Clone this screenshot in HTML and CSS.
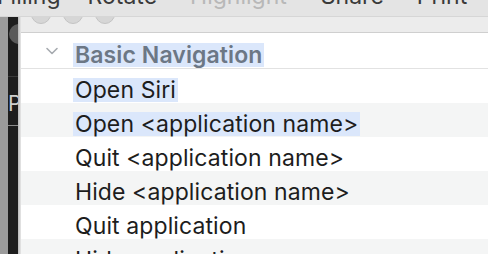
FILE: index.html
```html
<!DOCTYPE html>
<html>
<head>
<meta charset="utf-8">
<link rel="stylesheet" href="styles.css">
</head>
<body>
<div class="screen">
  <div class="menubar">
    <span class="mi">Filling</span>
    <span class="mi">Rotate</span>
    <span class="mi dis">Highlight</span>
    <span class="mi">Share</span>
    <span class="mi">Print</span>
  </div>
  <div class="main">
    <div class="side">
      <div class="edge"></div>
      <div class="dark">
        <div class="knob"></div>
        <div class="sep s1"></div>
        <div class="plet">P</div>
        <div class="sep s2"></div>
      </div>
      <div class="shadow"></div>
    </div>
    <div class="window">
      <div class="titlebar">
        <span class="light"></span><span class="light"></span><span class="light"></span>
      </div>
      <div class="list">
        <div class="row group">
          <svg class="chev" width="14" height="10" viewBox="0 0 14 10"><path d="M2 2.5 L7 7.5 L12 2.5" fill="none" stroke="#a7abb0" stroke-width="1.6" stroke-linecap="round" stroke-linejoin="round"/></svg>
          <span class="hl">Basic Navigation</span>
        </div>
        <div class="row"><span class="hl">Open Siri</span></div>
        <div class="row alt"><span class="hl">Open &lt;application name&gt;</span></div>
        <div class="row"><span class="txt">Quit &lt;application name&gt;</span></div>
        <div class="row alt"><span class="txt">Hide &lt;application name&gt;</span></div>
        <div class="row"><span class="txt">Quit application</span></div>
        <div class="row alt"><span class="txt">Hide application</span></div>
      </div>
    </div>
  </div>
</div>
</body>
</html>
```

FILE: styles.css
```css
html, body {
  margin: 0;
  padding: 0;
}
body {
  width: 488px;
  height: 254px;
  overflow: hidden;
  background: #ffffff;
  font-family: "Inter", "Liberation Sans", sans-serif;
}
.screen {
  width: 488px;
  height: 254px;
  display: flex;
  flex-direction: column;
  overflow: hidden;
}
.menubar {
  height: 16px;
  flex: none;
  background: #e4e4e4;
  display: flex;
  align-items: flex-end;
  overflow: hidden;
  position: relative;
  z-index: 2;
  box-shadow: 0 1px 0 #d6d6d6;
}
.mi {
  font-size: 23px;
  line-height: 23px;
  color: #3a3a3a;
  margin-bottom: 8px;
  white-space: nowrap;
  flex: none;
}
.mi:nth-child(1) { margin-left: -3px; }
.mi:nth-child(2) { margin-left: 27px; }
.mi:nth-child(3) { margin-left: 33px; }
.mi:nth-child(4) { margin-left: 34px; }
.mi:nth-child(5) { margin-left: 33px; }
.mi.dis { color: #b8b8b8; }
.main {
  flex: 1;
  display: flex;
  min-height: 0;
}
.side {
  width: 21px;
  flex: none;
  display: flex;
}
.edge {
  width: 8px;
  background: #9b9b9b;
}
.dark {
  width: 10px;
  background: #1d1d1d;
  position: relative;
  overflow: hidden;
}
.knob {
  position: absolute;
  left: 1px;
  top: 8px;
  width: 20px;
  height: 20px;
  border-radius: 50%;
  background: #5a5a5a;
}
.sep {
  position: absolute;
  left: 0;
  right: 0;
  height: 1px;
  background: #3a3a3a;
}
.s1 { top: 60px; }
.s2 { top: 109px; background: #8a8a8a; }
.plet {
  position: absolute;
  left: 0px;
  top: 76px;
  font-size: 21px;
  line-height: 24px;
  color: #cfcfcf;
}
.shadow {
  width: 3px;
  background: linear-gradient(to right, #b9b9b9, #e8e8e8);
}
.window {
  flex: 1;
  display: flex;
  flex-direction: column;
  min-width: 0;
}
.titlebar {
  height: 16px;
  flex: none;
  background: #ececec;
  border-bottom: 1px solid #cfcfcf;
  display: flex;
  align-items: flex-start;
  gap: 12px;
  padding-left: 10px;
  overflow: hidden;
}
.light {
  width: 18px;
  height: 18px;
  margin-top: -12px;
  border-radius: 50%;
  background: #d6d6d6;
  border: 1px solid #c4c4c4;
  flex: none;
}
.list {
  flex: 1;
  display: flex;
  flex-direction: column;
}
.row {
  height: 34px;
  box-sizing: border-box;
  flex: none;
  display: flex;
  align-items: flex-end;
  padding-left: 52px;
  padding-bottom: 1px;
  background: #ffffff;
}
.row.alt { background: #f4f5f5; }
.row.group {
  height: 36px;
  border-bottom: 1px solid #e2e2e2;
  padding-left: 24px;
  padding-bottom: 1px;
}
.chev {
  flex: none;
  align-self: center;
  margin-top: 2px;
  margin-right: 14px;
}
.hl, .txt {
  display: inline-block;
  font-size: 23px;
  line-height: 24px;
  letter-spacing: 0.1px;
  color: #1d1d1d;
  padding: 0 2px;
  white-space: nowrap;
}
.hl { background: #dbe7fb; }
.group .hl {
  color: #6c7785;
  font-weight: 600;
}
```
